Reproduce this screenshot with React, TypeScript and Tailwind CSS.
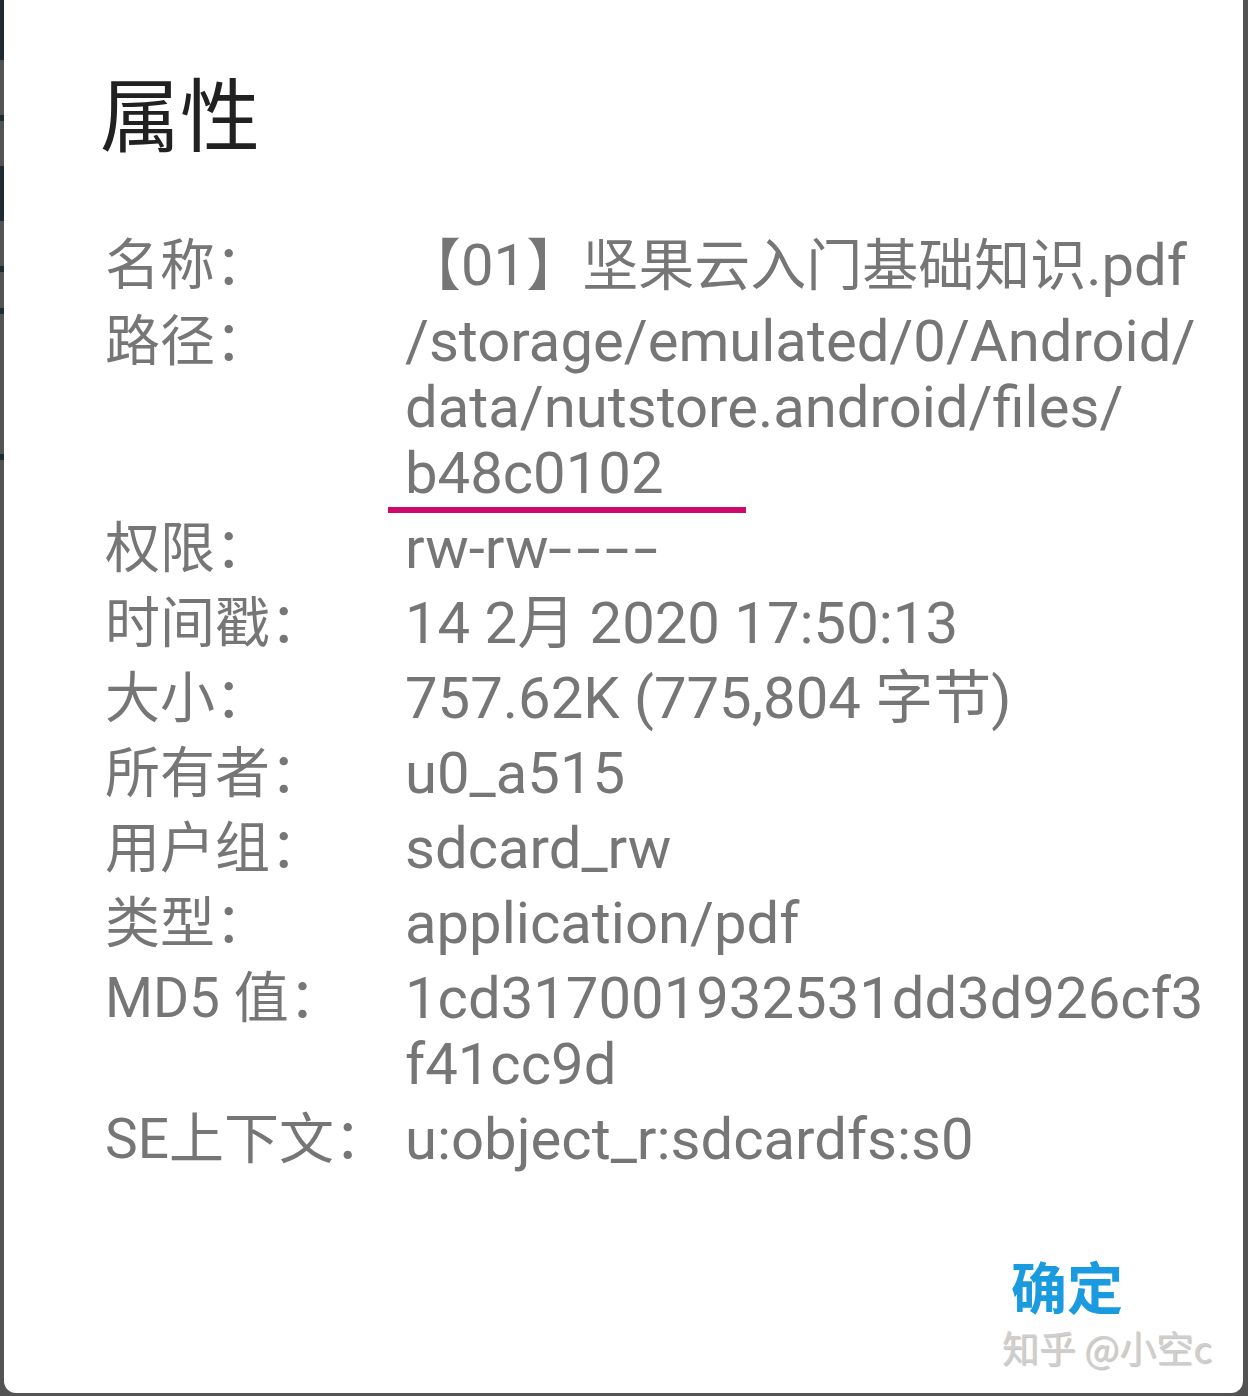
const rows: { label: string; lines: React.ReactNode[]; mark?: boolean }[] = [
  {
    label: "名称：",
    lines: [
      <>
        <span className="text-[56px]">【</span>01<span className="text-[56px]">】坚果云入门基础知识</span>.pdf
      </>,
    ],
  },
  {
    label: "路径：",
    lines: ["/storage/emulated/0/Android/", "data/nutstore.android/files/", "b48c0102"],
    mark: true,
  },
  {
    label: "权限：",
    lines: [
      <>
        rw-rw
        <span className="inline-block origin-left scale-x-[1.5] tracking-[3px]">----</span>
      </>,
    ],
  },
  { label: "时间戳：", lines: ["14 2月 2020 17:50:13"] },
  { label: "大小：", lines: ["757.62K (775,804 字节)"] },
  { label: "所有者：", lines: ["u0_a515"] },
  { label: "用户组：", lines: ["sdcard_rw"] },
  { label: "类型：", lines: ["application/pdf"] },
  { label: "MD5 值：", lines: ["1cd317001932531dd3d926cf3", "f41cc9d"] },
  { label: "SE上下文：", lines: ["u:object_r:sdcardfs:s0"] },
];

function Row({ label, lines, mark }: { label: string; lines: React.ReactNode[]; mark?: boolean }) {
  return (
    <div className="grid grid-cols-[300px_1fr]">
      <div className="text-[55px] leading-[66px] text-[#767676]">{label}</div>
      <div className="text-[58px] leading-[66px] text-[#767676] whitespace-nowrap">
        {lines.map((l, i) => (
          <div key={i} className="relative">
            {l}
            {mark && i === lines.length - 1 && (
              <span className="absolute left-[-17px] top-[67px] h-[6px] w-[358px] bg-[#cc0a6e]" />
            )}
          </div>
        ))}
      </div>
    </div>
  );
}

export default function App() {
  return (
    <div
      className="relative flex h-[1396px] w-[1248px] overflow-hidden bg-[#535353]"
      style={{ fontFamily: "Roboto, 'Noto Sans CJK SC', sans-serif" }}
    >
      <div className="flex w-[4px] flex-col">
        <div className="h-[60px] bg-[#1f2b33]" />
        <div className="mt-[55px] h-[6px] bg-[#1f2b33]" />
        <div className="mt-[45px] h-[55px] bg-[#1f2b33]" />
        <div className="mt-[45px] h-[6px] bg-[#1f2b33]" />
        <div className="mt-[36px] h-[6px] bg-[#1f2b33]" />
        <div className="mt-[140px] h-[6px] bg-[#1f2b33]" />
      </div>
      <div className="flex h-[1393px] flex-1 flex-col rounded-b-[12px] bg-white pl-[101px] pr-[34px] pt-[70px]">
        <div
          className="-ml-[5px] text-[80px] leading-[80px] text-[#212121]"
          style={{ fontFamily: "'Noto Sans CJK SC', sans-serif" }}
        >
          属性
        </div>
        <div className="mt-[82px] flex flex-col gap-[9px]">
          {rows.map((r) => (
            <Row key={r.label} {...r} />
          ))}
        </div>
        <div className="mt-[88px] flex justify-end pr-[86px]">
          <span
            className="text-[56px] font-bold leading-[50px] text-[#1a9be0]"
            style={{ fontFamily: "'Noto Sans CJK SC', sans-serif" }}
          >
            确定
          </span>
        </div>
      </div>
      <div className="w-[5px]" />
      <div
        className="absolute left-[1002px] top-[1327px] text-[37px] leading-[40px] text-[#cfcfcf] [text-shadow:1px_1px_1px_rgba(0,0,0,0.25)]"
        style={{ fontFamily: "'Noto Sans CJK SC', sans-serif" }}
      >
        知乎 @小空c
      </div>
    </div>
  );
}
